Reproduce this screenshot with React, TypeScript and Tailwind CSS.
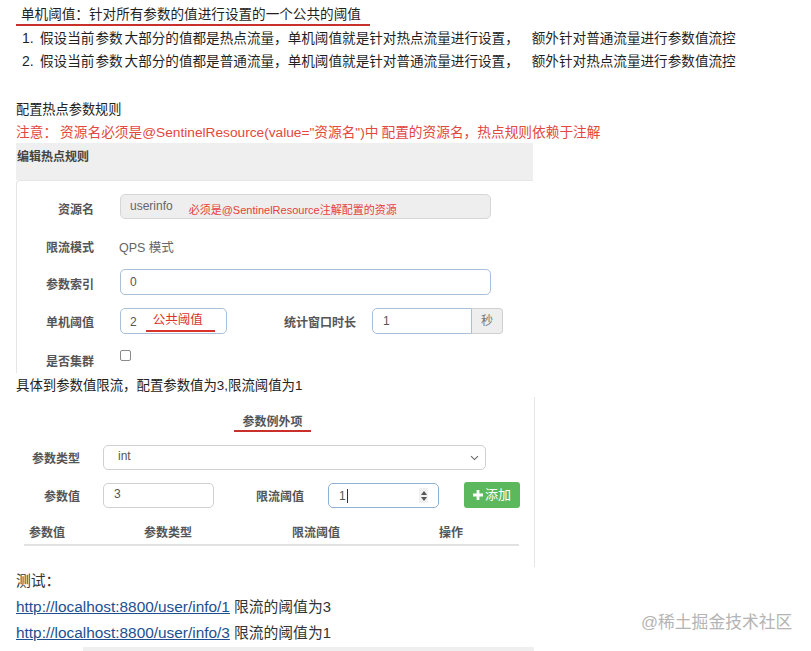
export default function App() {
  return (
    <div className="relative w-[811px] h-[651px] overflow-hidden bg-white font-['Liberation_Sans','Noto_Sans_CJK_SC',sans-serif] text-[#333]">
      {/* intro */}
      <div className="pl-[21px] pt-[5px] h-[24px] text-[13.6px] leading-[19px] text-[#1f1f1f] whitespace-pre">单机阈值：针对所有参数的值进行设置的一个公共的阈值</div>
      <div className="ml-[16px] w-[354px] h-[2px] bg-[#c9302c]" />
      <div className="mt-[1px] pl-[22px] text-[13.6px] leading-[23px] text-[#1f1f1f]">
        <div className="flex">
          <span className="w-[18px] text-[14px]">1.</span>
          <span>假设当前</span>
          <span className="ml-[1px]">参数</span>
          <span className="ml-[2px]">大部分的值都是热点流量，</span>
          <span>单机阈值就是针对热点流量进行设置，</span>
          <span className="ml-[13px]">额外针对普通流量进行参数值流控</span>
        </div>
        <div className="flex">
          <span className="w-[18px] text-[14px]">2.</span>
          <span>假设当前</span>
          <span className="ml-[1px]">参数</span>
          <span className="ml-[2px]">大部分的值都是普通流量，</span>
          <span>单机阈值就是针对普通流量进行设置，</span>
          <span className="ml-[13px]">额外针对热点流量进行参数值流控</span>
        </div>
      </div>

      <div className="mt-[27px] pl-[16px] text-[13.2px] leading-[20px] text-[#222]">配置热点参数规则</div>
      <div className="mt-[3px] pl-[16px] text-[13.7px] leading-[20px] text-[#e2483d] flex">
        <span>注意：</span>
        <span className="ml-[3px]">资源名必须是@SentinelResource(value="资源名")中</span>
        <span className="ml-[3px]">配置的资源名，热点规则依赖于注解</span>
      </div>

      {/* panel 1 */}
      <div className="ml-[16px] w-[517px] h-[37px] bg-[#efefef] pl-[1px] pt-[6px] text-[12px] leading-[16px] font-bold text-[#444]">编辑热点规则</div>
      <div className="ml-[16px] w-[517px] h-[193px] overflow-hidden border-l border-t border-[#e6e6e6] rounded-tl-[4px] pt-[13px] text-[12px]">
        {/* row 1 */}
        <div className="flex h-[25px]">
          <div className="w-[77px] text-right font-bold text-[#555] leading-[16px] pt-[8px]">资源名</div>
          <div className="ml-[26px] w-[371px] h-[25px] bg-[#eeeeee] border border-[#d6d6d6] rounded-[5px] flex items-start">
            <span className="pl-[9px] pt-[3px] leading-[16px] text-[#666]">userinfo</span>
            <span className="ml-[16px] pt-[8px] leading-[14px] text-[11px] text-[#e8403a]">必须是@SentinelResource注解配置的资源</span>
          </div>
        </div>
        {/* row 2 */}
        <div className="flex h-[20px] mt-[19px] leading-[20px]">
          <div className="w-[77px] text-right font-bold text-[#555]">限流模式</div>
          <div className="ml-[25px] text-[12.5px] text-[#666]">QPS 模式</div>
        </div>
        {/* row 3 */}
        <div className="flex h-[26px] mt-[11px]">
          <div className="w-[77px] text-right font-bold text-[#555] leading-[16px] pt-[8px]">参数索引</div>
          <div className="ml-[26px] w-[371px] h-[26px] border border-[#a9bfd7] rounded-[5px] pl-[9px] pt-[4px] leading-[16px] text-[#555]">0</div>
        </div>
        {/* row 4 */}
        <div className="flex h-[26px] mt-[13px]">
          <div className="w-[77px] text-right font-bold text-[#555] leading-[16px] pt-[7px]">单机阈值</div>
          <div className="ml-[26px] w-[107px] h-[26px] border border-[#a9bfd7] rounded-[5px] flex items-start">
            <span className="pl-[9px] pt-[5px] leading-[16px] text-[#555]">2</span>
            <div className="ml-[9px] flex flex-col items-start">
              <span className="pl-[7px] pt-[3px] text-[12.5px] leading-[16px] text-[#d9342b]">公共阈值</span>
              <div className="w-[69px] h-[2px] bg-[#d9342b] mt-[2px]" />
            </div>
          </div>
          <div className="ml-[57px] font-bold text-[#555] leading-[16px] pt-[7px]">统计窗口时长</div>
          <div className="ml-[16px] flex h-[26px]">
            <div className="w-[100px] h-[26px] border border-[#a9bfd7] rounded-l-[5px] pl-[10px] pt-[4px] leading-[16px] text-[#555]">1</div>
            <div className="w-[31px] h-[26px] bg-[#eeeeee] border border-l-0 border-[#d0d0d0] rounded-r-[4px] flex items-center justify-center text-[#777]">秒</div>
          </div>
        </div>
        {/* row 5 */}
        <div className="flex h-[27px] mt-[12px]">
          <div className="w-[77px] text-right font-bold text-[#555] leading-[16px] pt-[8px]">是否集群</div>
          <div className="ml-[26px] mt-[4px] w-[11px] h-[11px] border border-[#8a8a8a] rounded-[2px] bg-white" />
        </div>
      </div>

      <div className="mt-[3px] pl-[16px] text-[13.4px] leading-[20px] text-[#222]">具体到参数值限流，配置参数值为3,限流阈值为1</div>

      {/* panel 2 */}
      <div className="mt-[1px] ml-[16px] w-[519px] h-[170px] border-r border-[#e6e6e6] text-[12px]">
        <div className="flex flex-col items-center pr-[5px] pt-[17px]">
          <div className="font-bold text-[#555] leading-[16px]">参数例外项</div>
          <div className="w-[77px] h-[2px] bg-[#c9302c]" />
        </div>
        {/* select row */}
        <div className="flex h-[25px] mt-[13px]">
          <div className="w-[64px] text-right font-bold text-[#555] leading-[16px] pt-[6px]">参数类型</div>
          <div className="ml-[23px] w-[383px] h-[25px] border border-[#d0d0d0] rounded-[5px] flex items-center justify-between pl-[14px] pr-[6px] text-[#555]">
            <span className="leading-[16px] -mt-[3px]">int</span>
            <svg width="9" height="6" viewBox="0 0 9 6" className="mt-[1px]">
              <path d="M1 1.2 L4.5 4.6 L8 1.2" fill="none" stroke="#666" strokeWidth="1.1" />
            </svg>
          </div>
        </div>
        {/* value row */}
        <div className="flex h-[25px] mt-[13px]">
          <div className="w-[64px] text-right font-bold text-[#555] leading-[16px] pt-[6px]">参数值</div>
          <div className="ml-[23px] w-[111px] h-[25px] border border-[#d0d0d0] rounded-[5px] pl-[10px] pt-[2px] leading-[16px] text-[#555]">3</div>
          <div className="ml-[42px] font-bold text-[#555] leading-[16px] pt-[6px]">限流阈值</div>
          <div className="ml-[24px] w-[111px] h-[25px] border border-[#8fb1d6] rounded-[5px] flex items-center justify-between pl-[10px] pr-[10px] text-[#555]">
            <span className="flex items-center leading-[16px]">1<span className="ml-[1px] w-[1px] h-[14px] bg-[#333]" /></span>
            <span className="w-[9px] h-[15px] bg-[#f0f0f0] flex flex-col items-center justify-center gap-[2px]">
              <svg width="6" height="4" viewBox="0 0 6 4"><path d="M0 4 L3 0 L6 4 Z" fill="#555" /></svg>
              <svg width="6" height="4" viewBox="0 0 6 4"><path d="M0 0 L3 4 L6 0 Z" fill="#555" /></svg>
            </span>
          </div>
          <div className="ml-[25px] -mt-[1px] w-[56px] h-[26px] bg-[#5cb85c] rounded-[3px] flex items-center justify-center text-white text-[13px]">
            <svg width="10" height="10" viewBox="0 0 10 10" className="mr-[2px]">
              <path d="M3.6 0 H6.4 V3.6 H10 V6.4 H6.4 V10 H3.6 V6.4 H0 V3.6 H3.6 Z" fill="#fff" />
            </svg>
            <span className="leading-[16px]">添加</span>
          </div>
        </div>
        {/* table header */}
        <div className="flex mt-[17px] pl-[13px] font-bold text-[#555] leading-[16px]">
          <div className="w-[115px]">参数值</div>
          <div className="w-[148px]">参数类型</div>
          <div className="w-[147px]">限流阈值</div>
          <div>操作</div>
        </div>
        <div className="ml-[8px] mt-[3px] w-[495px] h-[2px] bg-[#e2e2e2]" />
      </div>

      {/* test */}
      <div className="mt-[1px] pl-[16px] text-[14.8px] leading-[26px] text-[#333]">
        <div>测试：</div>
        <div className="flex">
          <span className="underline text-[15.4px] text-[#1d4f91]">http://localhost:8800/user/info/1</span>
          <span className="ml-[4px]">限流的阈值为3</span>
        </div>
        <div className="flex">
          <span className="underline text-[15.4px] text-[#1d4f91]">http://localhost:8800/user/info/3</span>
          <span className="ml-[4px]">限流的阈值为1</span>
        </div>
      </div>
      <div className="mt-[1px] ml-[83px] w-[451px] h-[4px] bg-[#efefef]" />

      <div className="absolute left-[641px] top-[612px] text-[16.8px] leading-[22px] text-[#b4b4b4]">@稀土掘金技术社区</div>
    </div>
  );
}
